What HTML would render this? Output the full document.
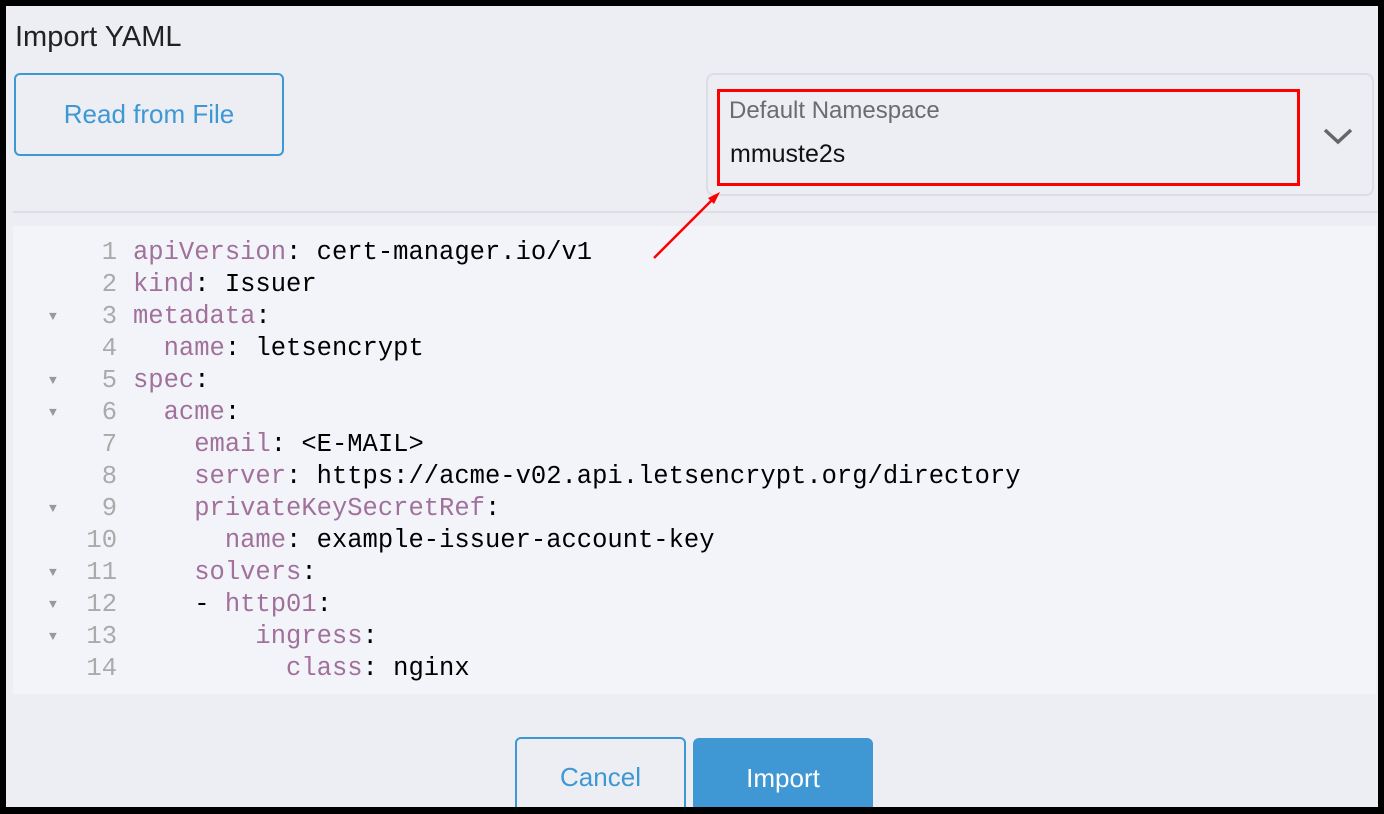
<!DOCTYPE html>
<html><head><meta charset="utf-8"><style>
*{margin:0;padding:0;box-sizing:border-box}
html,body{width:1384px;height:814px;background:#000;overflow:hidden}
.pg{position:absolute;left:6px;top:6px;width:1372px;height:801px;background:#edeef3;font-family:"Liberation Sans",sans-serif;overflow:hidden}
.title{position:absolute;left:9px;top:15px;font-size:29px;color:#222}
.btn{position:absolute;border:2px solid #3d98d3;border-radius:6px;color:#3d98d3;font-size:26px;display:flex;align-items:center;justify-content:center}
.sel{position:absolute;left:700px;top:67px;width:668px;height:123px;border:2px solid #dcdee5;border-radius:8px}
.red{position:absolute;left:711px;top:83px;width:583px;height:97px;border:3px solid #f00}
.lbl{position:absolute;left:723px;top:91px;font-size:24px;color:#6b6b72}
.val{position:absolute;left:724px;top:134px;font-size:25px;color:#111}
.div{position:absolute;left:7px;right:0;top:205px;height:2px;background:#dcdee5}
.ed{position:absolute;left:7px;top:220px;width:1363px;height:468px;background:#f3f4f9;padding-top:11px;font-family:"Liberation Mono",monospace;font-size:25.5px}
.l{height:32px;line-height:32px;white-space:pre;position:relative}
.n{display:inline-block;width:104px;text-align:right;color:#aaa;margin-right:16px}
.k{color:#a0719b}
.t{position:absolute;left:36px;top:0;color:#999;font-size:13px}
</style></head><body><div class="pg">
<div class="title">Import YAML</div>
<div class="btn" style="left:8px;top:67px;width:270px;height:83px">Read from File</div>
<div class="sel"></div><div class="red"></div>
<div class="lbl">Default Namespace</div><div class="val">mmuste2s</div>
<svg style="position:absolute;left:1316px;top:120px" width="32" height="20"><path d="M3 4 L16 16 L29 4" stroke="#666" stroke-width="3.5" fill="none"/></svg>
<div class="div"></div>
<div class="ed">
<div class="l"><span class="n">1</span><span class="k">apiVersion</span>: cert-manager.io/v1</div>
<div class="l"><span class="n">2</span><span class="k">kind</span>: Issuer</div>
<div class="l"><span class="t">▼</span><span class="n">3</span><span class="k">metadata</span>:</div>
<div class="l"><span class="n">4</span>  <span class="k">name</span>: letsencrypt</div>
<div class="l"><span class="t">▼</span><span class="n">5</span><span class="k">spec</span>:</div>
<div class="l"><span class="t">▼</span><span class="n">6</span>  <span class="k">acme</span>:</div>
<div class="l"><span class="n">7</span>    <span class="k">email</span>: &lt;E-MAIL&gt;</div>
<div class="l"><span class="n">8</span>    <span class="k">server</span>: https://acme-v02.api.letsencrypt.org/directory</div>
<div class="l"><span class="t">▼</span><span class="n">9</span>    <span class="k">privateKeySecretRef</span>:</div>
<div class="l"><span class="n">10</span>      <span class="k">name</span>: example-issuer-account-key</div>
<div class="l"><span class="t">▼</span><span class="n">11</span>    <span class="k">solvers</span>:</div>
<div class="l"><span class="t">▼</span><span class="n">12</span>    - <span class="k">http01</span>:</div>
<div class="l"><span class="t">▼</span><span class="n">13</span>        <span class="k">ingress</span>:</div>
<div class="l"><span class="n">14</span>          <span class="k">class</span>: nginx</div>
</div>
<svg style="position:absolute;left:640px;top:180px;z-index:5" width="80" height="80"><path d="M8 72 L70 10" stroke="#f00" stroke-width="2.5"/><path d="M74 6 L62 12 L68 18 Z" fill="#f00"/></svg>
<div class="btn" style="left:509px;top:731px;width:171px;height:90px;padding-bottom:10px">Cancel</div>
<div class="btn" style="left:687px;top:732px;width:180px;height:90px;background:#3f98d4;color:#fff;border-color:#3f98d4;padding-bottom:10px">Import</div>
</div></body></html>
